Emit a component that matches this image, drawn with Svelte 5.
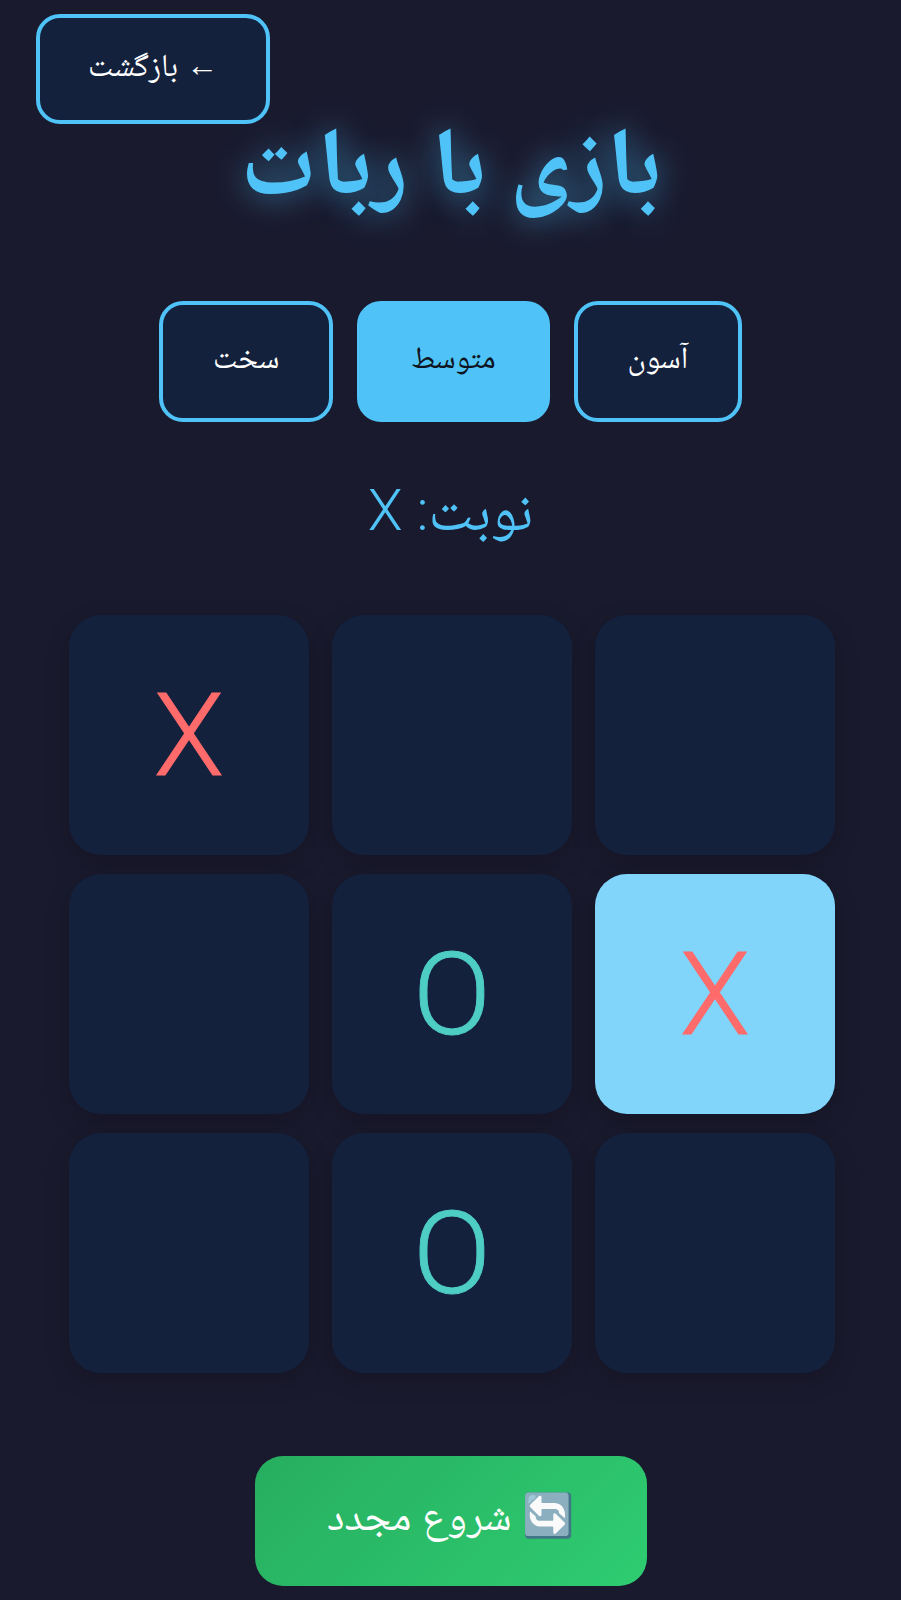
<script>
    const cells = ['X', '', '', '', 'O', 'X', '', 'O', ''];
    const levels = ['آسون', 'متوسط', 'سخت'];
    let level = 'متوسط';
</script>

<main dir="rtl">
    <div class="top">
        <button class="back">← بازگشت</button>
    </div>
    <h1>بازی با ربات</h1>
    <div class="levels">
        {#each levels as l}
            <button class="level" class:active={l === level}>{l}</button>
        {/each}
    </div>
    <div class="status">نوبت: X</div>
    <div class="board">
        {#each cells as c, i}
            <div class="cell" class:x={c === 'X'} class:o={c === 'O'} class:last={i === 5}>{c}</div>
        {/each}
    </div>
    <button class="restart"><span class="emoji">🔄</span> شروع مجدد</button>
</main>

<style>
    :global(body) {
        background: #1a1a2e;
    }
    main {
        height: 1600px;
        box-sizing: border-box;
        padding-top: 14px;
        background: #1a1a2e;
        color: #fff;
        font-family: Roboto, "Noto Naskh Arabic", sans-serif;
        font-weight: 300;
        display: flex;
        flex-direction: column;
        align-items: center;
        overflow: hidden;
    }
    .top {
        width: 100%;
        display: flex;
        justify-content: flex-end;
        padding-left: 36px;
        box-sizing: border-box;
        height: 110px;
    }
    button {
        font-family: inherit;
        font-weight: 400;
        color: #fff;
    }
    .back {
        width: 234px;
        height: 110px;
        background: #14213d;
        border: 4px solid #4fc3f7;
        border-radius: 24px;
        font-size: 32px;
    }
    h1 {
        margin: 0;
        height: 100px;
        font-size: 96px;
        line-height: 74px;
        color: #4fc3f7;
        text-shadow: 0 0 32px rgba(79, 195, 247, 0.7);
    }
    .levels {
        display: flex;
        gap: 24px;
        margin-top: 77px;
    }
    .level {
        height: 121px;
        padding: 0 50px;
        background: #14213d;
        border: 4px solid #4fc3f7;
        border-radius: 24px;
        font-size: 31px;
    }
    .level.active {
        background: #4fc3f7;
        color: #0d1320;
        border-color: #4fc3f7;
    }
    .status {
        margin-top: 52px;
        font-size: 57px;
        color: #4fc3f7;
        height: 74px;
        line-height: 74px;
    }
    .board {
        direction: ltr;
        display: grid;
        grid-template-columns: repeat(3, 240px);
        grid-auto-rows: 240px;
        gap: 19px 23px;
        margin-top: 67px;
        margin-left: 3px;
    }
    .cell {
        background: #14213d;
        border-radius: 32px;
        display: flex;
        align-items: center;
        justify-content: center;
        font-size: 115px;
        font-weight: 300;
        -webkit-text-stroke: 1px currentColor;
        box-shadow: 0 8px 24px rgba(0, 0, 0, 0.2);
    }
    .x { color: #ff6b6b; }
    .o { color: #4ecdc4; }
    .last { background: #81d4fa; }
    .restart {
        margin-top: 83px;
        width: 392px;
        height: 130px;
        background: linear-gradient(135deg, #27ae60, #2ecc71);
        border: none;
        border-radius: 28px;
        font-size: 42px;
    }
    .emoji {
        font-size: 42px;
    }
</style>
